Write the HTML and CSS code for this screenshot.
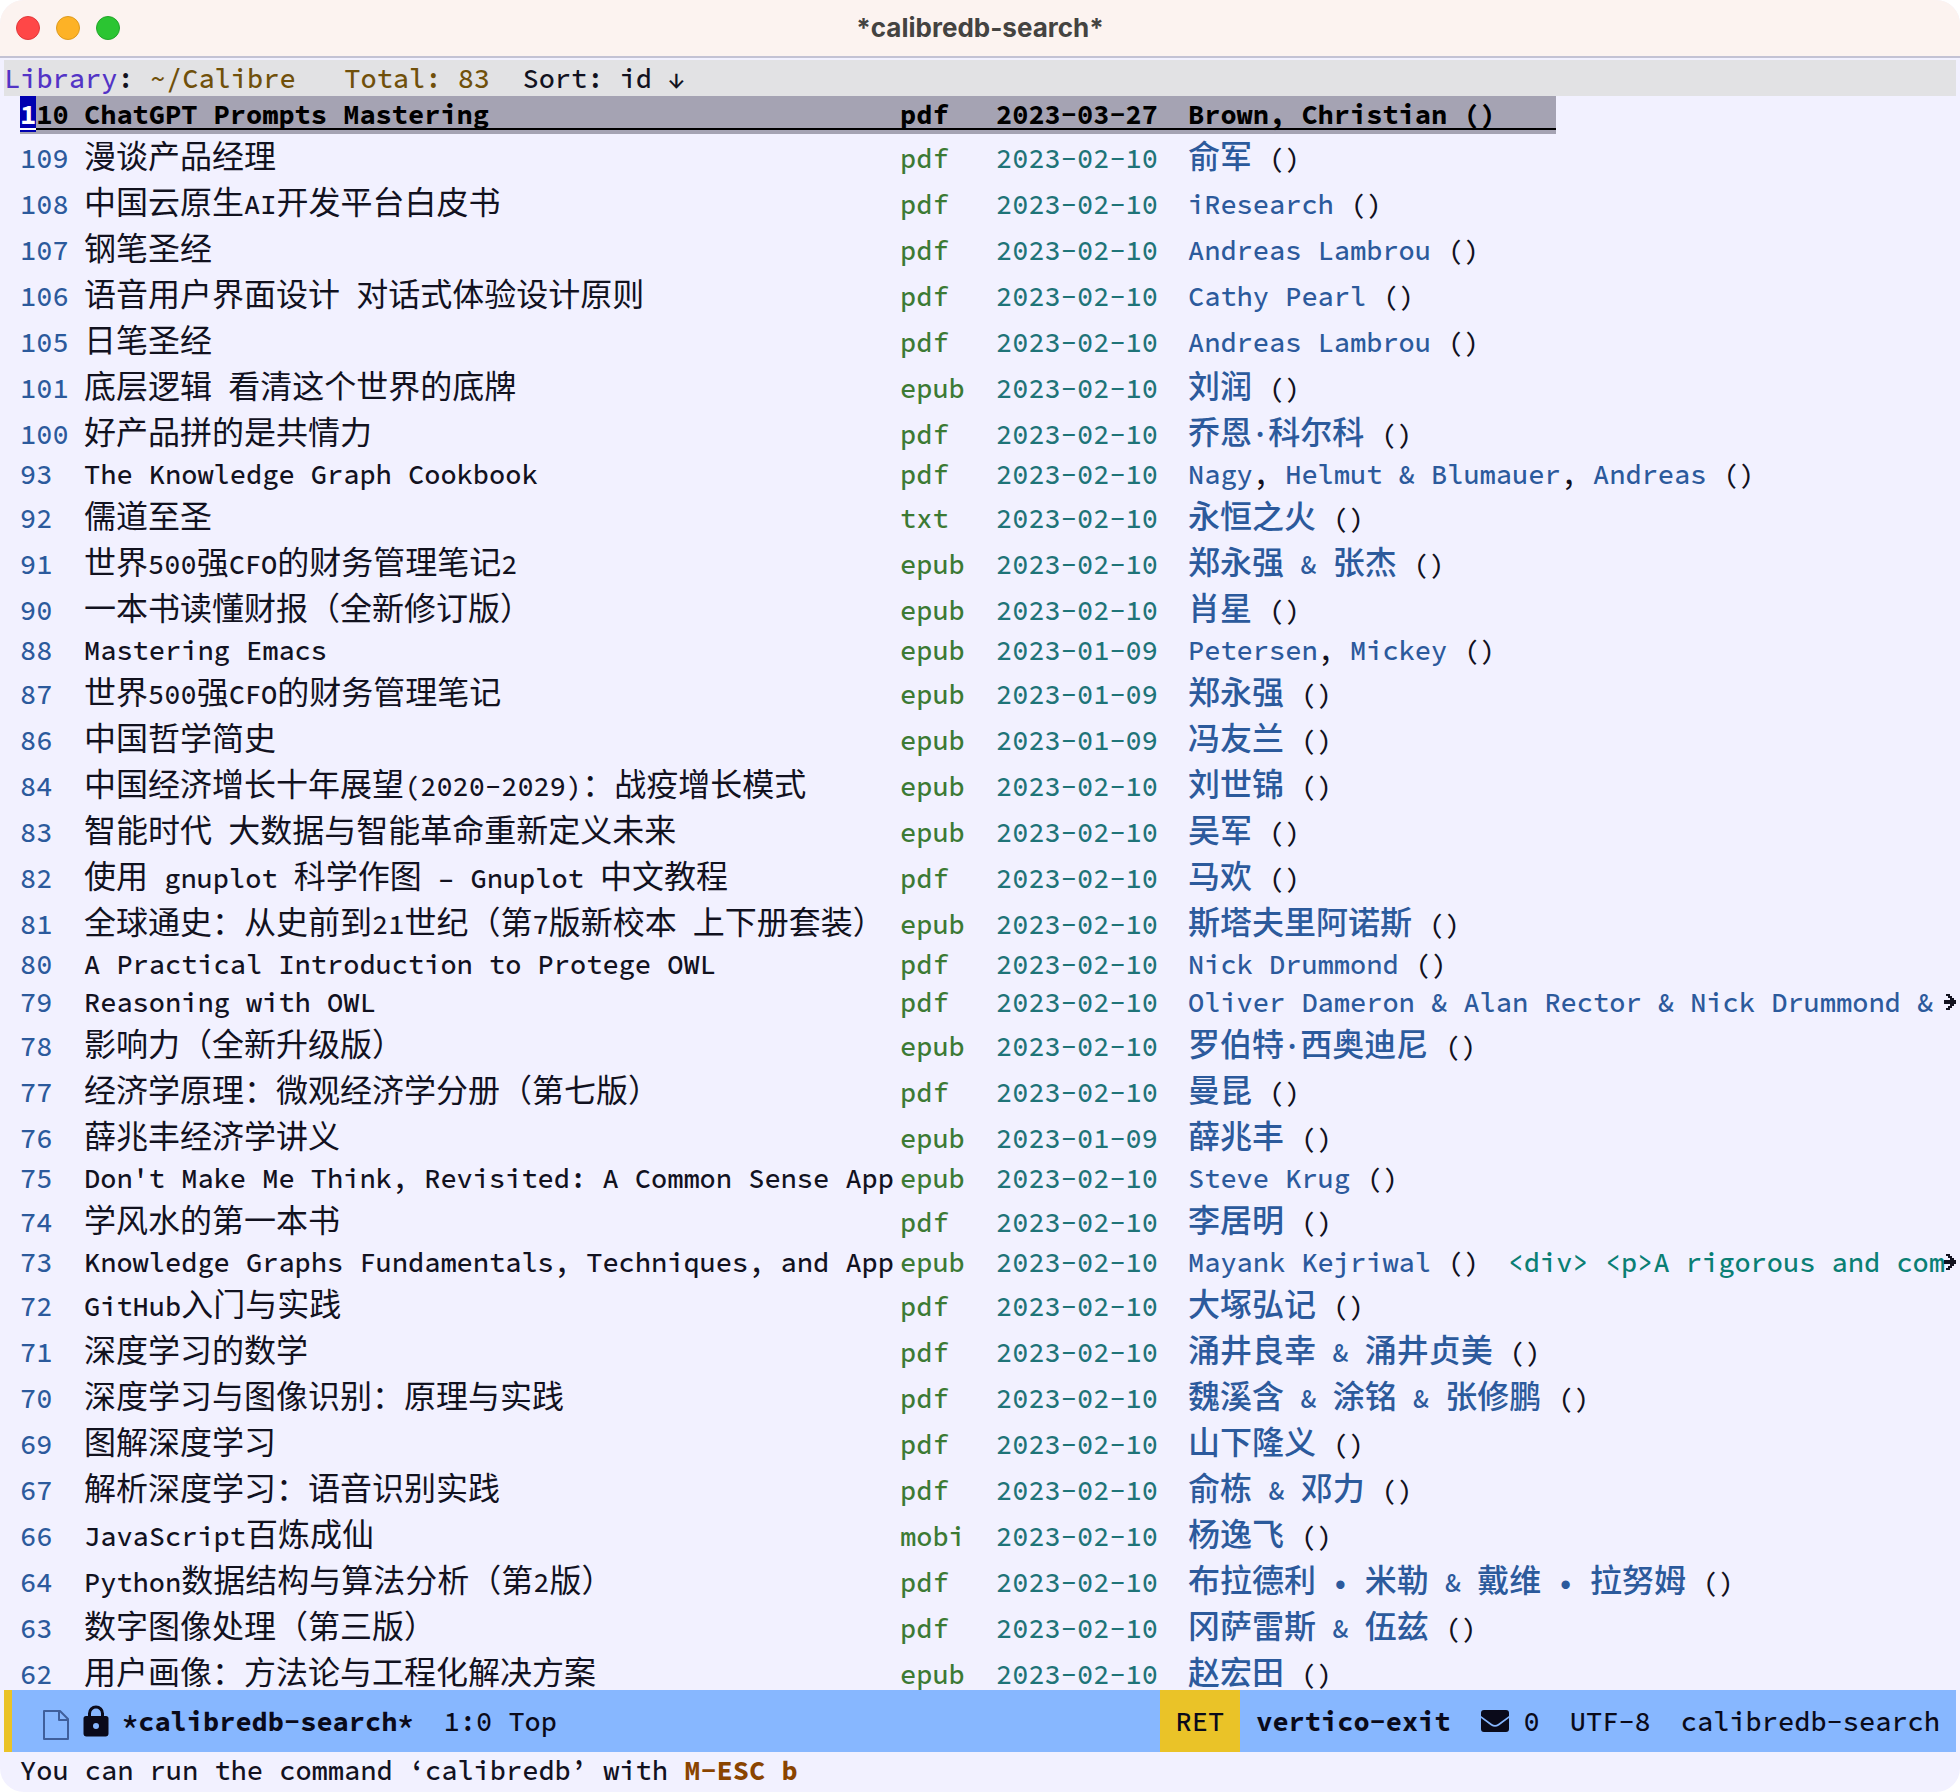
FILE: index.html
```
<!DOCTYPE html>
<html lang="zh-CN">
<head>
    <meta charset="UTF-8">
    <meta name="viewport" content="width=device-width, initial-scale=1.0">
    <title>*calibredb-search*</title>
    <link rel="stylesheet" href="styles.css">
</head>
<body>
    <div class="window">
        <header class="titlebar">
            <div class="lights">
                <button class="light close" aria-label="Close"></button>
                <button class="light minimize" aria-label="Minimize"></button>
                <button class="light zoom" aria-label="Zoom"></button>
            </div>
            <h1>*calibredb-search*</h1>
        </header>

        <div class="header-line"><span class="key">Library</span>: <span class="value">~/Calibre</span>   <span class="value">Total: 83</span>  Sort: id ↓</div>

        <main class="buffer">
            <table class="books">
                <colgroup>
                    <col class="col-id">
                    <col class="col-title">
                    <col class="col-format">
                    <col class="col-date">
                    <col class="col-author">
                    <col class="col-fringe">
                </colgroup>
                <tbody id="books"></tbody>
            </table>
        </main>

        <footer class="modeline">
            <svg class="icon-file" viewBox="0 0 28 32" width="28" height="32" fill="none" stroke="#3f5f9c" stroke-width="2" stroke-linejoin="round">
                <path d="M2 2h16l8 8v20H2z"/>
                <path d="M17 2v9h9"/>
            </svg>
            <svg class="icon-lock" viewBox="0 0 26 34" width="26" height="34">
                <path d="M6.500 14V9.500a6.500 6.500 0 0 1 13 0V14" fill="none" stroke="#0a0a1a" stroke-width="3"/>
                <path fill="#0a0a1a" fill-rule="evenodd" d="M3 12h20a2.500 2.500 0 0 1 2.500 2.500v15a3 3 0 0 1-3 3h-19a3 3 0 0 1-3-3v-15A2.500 2.500 0 0 1 3 12zm10 7a3 3 0 1 0 0 6 3 3 0 0 0 0-6z"/>
            </svg>
            <b class="name">*calibredb-search*</b>
            <span>1:0 Top</span>
            <span class="last-key">RET</span>
            <b class="last-command">vertico-exit</b>
            <span class="mail">
                <svg viewBox="0 0 28 22" width="28" height="22" fill="#0a0a1a">
                    <path d="M3 0h22a3 3 0 0 1 3 3v3l-11 8q-3 2-6 0L0 6V3a3 3 0 0 1 3-3z"/>
                    <path d="M0 8l10 7.500q4 2.500 8 0L28 8v11a3 3 0 0 1-3 3H3a3 3 0 0 1-3-3z"/>
                </svg>
                0
            </span>
            <span>UTF-8</span>
            <span class="mode">calibredb-search</span>
        </footer>

        <div class="echo">You can run the command ‘calibredb’ with <b>M-ESC b</b></div>
    </div>
    <script src="script.js"></script>
</body>
</html>
```

FILE: styles.css
```
body {
    margin: 0;
    background: #fff;
    color: #12121f;
    font-family: "Source Code Pro", "Liberation Mono", "Noto Sans CJK SC", monospace;
    font-size: 27px;
    font-weight: 500;
    line-height: 34px;
}
b {
    font-weight: 700;
}
.window {
    display: flex;
    flex-direction: column;
    height: 100vh;
    background: #f2f1ff;
    border-radius: 24px;
    overflow: hidden;
}

/* title bar */
.titlebar {
    display: grid;
    grid-template-columns: 1fr auto 1fr;
    align-items: center;
    flex: none;
    height: 56px;
    background: #fcf3f0;
    border-bottom: 2px solid #c3c2d4;
}
.lights {
    display: flex;
    gap: 16px;
    padding-left: 16px;
}
.light {
    width: 24px;
    height: 24px;
    padding: 0;
    border: 1px solid;
    border-radius: 50%;
}
.close {
    background: #ff4747;
    border-color: #e0383b;
}
.minimize {
    background: #fdb226;
    border-color: #dd9a1e;
}
.zoom {
    background: #2bc532;
    border-color: #22a52a;
}
h1 {
    margin: 0;
    font-family: Inter, "Liberation Sans", sans-serif;
    font-size: 26px;
    font-weight: 700;
    color: #444341;
}

/* header line */
.header-line {
    flex: none;
    margin: 2px 4px 0;
    height: 36px;
    line-height: 36px;
    background: #e2e2e4;
    white-space: pre;
}
.key {
    color: #5334c6;
}
.value {
    color: #70500a;
}

/* book list */
.buffer {
    flex: 1;
    min-height: 0;
    overflow: hidden;
    padding: 0 4px 0 20px;
}
.books {
    width: 100%;
    table-layout: fixed;
    border-collapse: collapse;
}
.col-id {
    width: 64px;
}
.col-title {
    width: 816px;
}
.col-format {
    width: 96px;
}
.col-date {
    width: 192px;
}
.col-fringe {
    width: 12px;
}
.books td {
    padding: 1px 0 3px;
    vertical-align: baseline;
    white-space: pre;
}
.books .wide td {
    padding: 7px 0 5px;
}
.han {
    font-family: "Noto Sans CJK SC", sans-serif;
    font-size: 32px;
    font-weight: 400;
    line-height: 1px;
}
.author .han {
    font-weight: 500;
}
.id,
.author span {
    color: #2c5a9c;
}
.format {
    color: #3c7a34;
}
.date {
    color: #1f7478;
}
.author .comment {
    margin-left: 28px;
    color: #0a7f74;
}
.fringe svg {
    display: block;
}

/* selected line */
.current {
    background: linear-gradient(#a5a3b3 32px, #000 32px, #000 34px, #a5a3b3 34px) no-repeat;
    background-size: 1536px 100%;
}
.current td,
.current span {
    color: #000;
    font-weight: 700;
}
.current .cursor {
    display: inline-block;
    margin: -1px 0;
    padding-top: 1px;
    height: 35px;
    color: #fff;
    background: linear-gradient(#0000b0 32px, #fff 32px, #fff 34px, #0000b0 34px);
}

/* mode line */
.modeline {
    display: flex;
    align-items: center;
    flex: none;
    height: 62px;
    margin: 0 4px;
    padding-right: 16px;
    border-left: 8px solid #eac328;
    background: #87b7ff;
    color: #0a0a1a;
    white-space: nowrap;
}
.icon-file {
    margin: 8px 13px 0 30px;
}
.name {
    margin: 0 30px 0 13px;
}
.last-key {
    margin-left: auto;
    padding: 14px 16px;
    background: #eac328;
}
.last-command {
    margin: 0 30px 0 16px;
}
.mail {
    display: flex;
    align-items: center;
    gap: 15px;
    margin-right: 30px;
}
.mode {
    margin-left: 30px;
}

/* echo area */
.echo {
    flex: none;
    height: 40px;
    line-height: 36px;
    padding-left: 20px;
    white-space: pre;
}
.echo b {
    color: #8a4400;
}
```

FILE: script.js
```
// id, title, format, date, author, comment
const books = [
    [110, "ChatGPT Prompts Mastering", "pdf", "2023-03-27", "Brown, Christian"],
    [109, "漫谈产品经理", "pdf", "2023-02-10", "俞军"],
    [108, "中国云原生AI开发平台白皮书", "pdf", "2023-02-10", "iResearch"],
    [107, "钢笔圣经", "pdf", "2023-02-10", "Andreas Lambrou"],
    [106, "语音用户界面设计 对话式体验设计原则", "pdf", "2023-02-10", "Cathy Pearl"],
    [105, "日笔圣经", "pdf", "2023-02-10", "Andreas Lambrou"],
    [101, "底层逻辑 看清这个世界的底牌", "epub", "2023-02-10", "刘润"],
    [100, "好产品拼的是共情力", "pdf", "2023-02-10", "乔恩·科尔科"],
    [93, "The Knowledge Graph Cookbook", "pdf", "2023-02-10", "Nagy, Helmut & Blumauer, Andreas"],
    [92, "儒道至圣", "txt", "2023-02-10", "永恒之火"],
    [91, "世界500强CFO的财务管理笔记2", "epub", "2023-02-10", "郑永强 & 张杰"],
    [90, "一本书读懂财报（全新修订版）", "epub", "2023-02-10", "肖星"],
    [88, "Mastering Emacs", "epub", "2023-01-09", "Petersen, Mickey"],
    [87, "世界500强CFO的财务管理笔记", "epub", "2023-01-09", "郑永强"],
    [86, "中国哲学简史", "epub", "2023-01-09", "冯友兰"],
    [84, "中国经济增长十年展望(2020-2029)：战疫增长模式", "epub", "2023-02-10", "刘世锦"],
    [83, "智能时代 大数据与智能革命重新定义未来", "epub", "2023-02-10", "吴军"],
    [82, "使用 gnuplot 科学作图 – Gnuplot 中文教程", "pdf", "2023-02-10", "马欢"],
    [81, "全球通史：从史前到21世纪（第7版新校本 上下册套装）", "epub", "2023-02-10", "斯塔夫里阿诺斯"],
    [80, "A Practical Introduction to Protege OWL", "pdf", "2023-02-10", "Nick Drummond"],
    [79, "Reasoning with OWL", "pdf", "2023-02-10", "Oliver Dameron & Alan Rector & Nick Drummond &", null],
    [78, "影响力（全新升级版）", "epub", "2023-02-10", "罗伯特·西奥迪尼"],
    [77, "经济学原理：微观经济学分册（第七版）", "pdf", "2023-02-10", "曼昆"],
    [76, "薛兆丰经济学讲义", "epub", "2023-01-09", "薛兆丰"],
    [75, "Don't Make Me Think, Revisited: A Common Sense App", "epub", "2023-02-10", "Steve Krug"],
    [74, "学风水的第一本书", "pdf", "2023-02-10", "李居明"],
    [73, "Knowledge Graphs Fundamentals, Techniques, and App", "epub", "2023-02-10", "Mayank Kejriwal", "<div> <p>A rigorous and com"],
    [72, "GitHub入门与实践", "pdf", "2023-02-10", "大塚弘记"],
    [71, "深度学习的数学", "pdf", "2023-02-10", "涌井良幸 & 涌井贞美"],
    [70, "深度学习与图像识别：原理与实践", "pdf", "2023-02-10", "魏溪含 & 涂铭 & 张修鹏"],
    [69, "图解深度学习", "pdf", "2023-02-10", "山下隆义"],
    [67, "解析深度学习：语音识别实践", "pdf", "2023-02-10", "俞栋 & 邓力"],
    [66, "JavaScript百炼成仙", "mobi", "2023-02-10", "杨逸飞"],
    [64, "Python数据结构与算法分析（第2版）", "pdf", "2023-02-10", "布拉德利 • 米勒 & 戴维 • 拉努姆"],
    [63, "数字图像处理（第三版）", "pdf", "2023-02-10", "冈萨雷斯 & 伍兹"],
    [62, "用户画像：方法论与工程化解决方案", "epub", "2023-02-10", "赵宏田"]
];

const hanRun = /[\u3000-\u9fff\uff00-\uffef]+/g;
const arrow = '<svg viewBox="0 2 12 26" width="12" height="26" fill="#12121f">' +
    '<path d="M2 10h4v2h2v2h2v2h2v4h-2v2h-2v2h-2v2H2v-2h2v-2h2v-2H0v-4h6v-2H4v-2H2z"/></svg>';

function markup(text) {
    return text
        .replace(/&/g, '&amp;')
        .replace(/</g, '&lt;')
        .replace(hanRun, run => `<span class="han">${run}</span>`);
}

function authors(text) {
    return text.split(',').map(part => `<span>${markup(part)}</span>`).join(',');
}

// a comment of null marks a line that is cut before the closing "()"
document.getElementById('books').innerHTML = books.map(([id, title, format, date, author, comment], i) => {
    const truncated = comment !== undefined;
    const idText = i === 0 ? `<span class="cursor">${String(id)[0]}</span>${String(id).slice(1)}` : id;
    const rowClass = i === 0 ? 'current' : (title + author).match(hanRun) ? 'wide' : '';
    return `<tr class="${rowClass}">
        <td class="id">${idText}</td><td>${markup(title)}</td><td class="format">${format}</td><td class="date">${date}</td>
        <td class="author">${authors(author)}${comment === null ? '' : ' ()'}${comment ? `<span class="comment">${markup(comment)}</span>` : ''}</td>
        <td class="fringe">${truncated ? arrow : ''}</td>
    </tr>`;
}).join('');
```
